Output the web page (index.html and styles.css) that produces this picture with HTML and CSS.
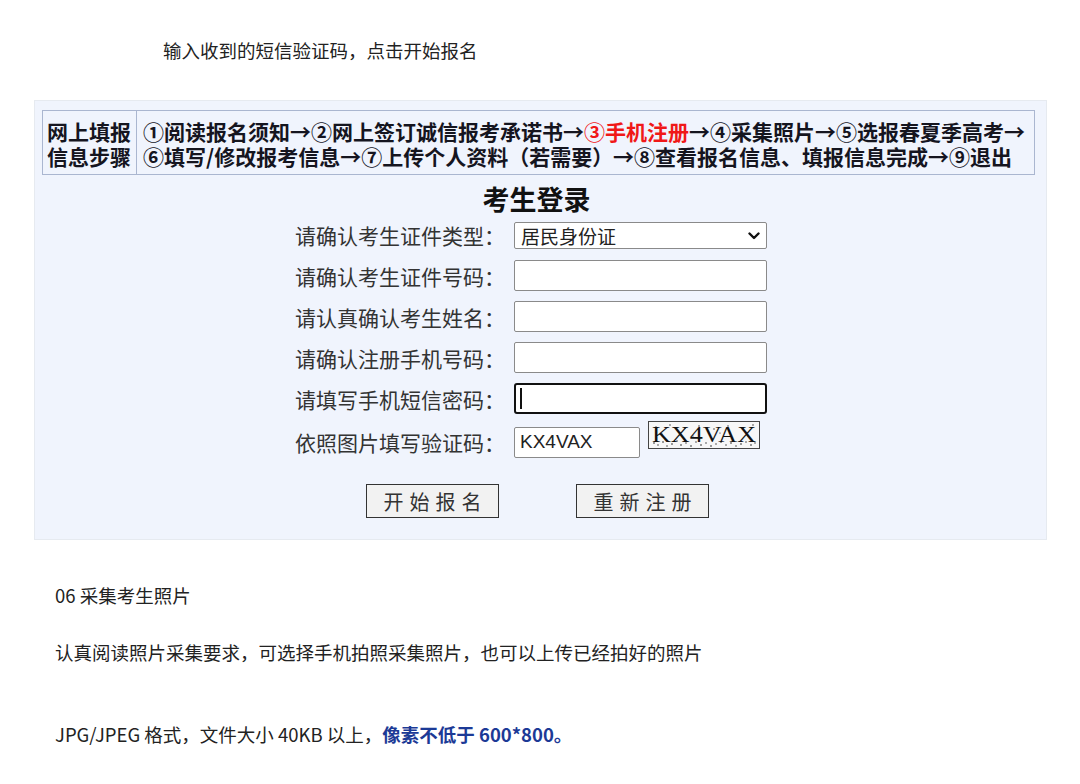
FILE: index.html
```html
<!DOCTYPE html>
<html lang="zh-CN">
<head>
<meta charset="utf-8">
<title>考生登录</title>
<link rel="stylesheet" href="styles.css">
</head>
<body>
<p class="intro">输入收到的短信验证码，点击开始报名</p>

<div class="panel">
  <table class="steps">
    <tr>
      <td class="steps-head">网上填报<br>信息步骤</td>
      <td class="steps-body">①阅读报名须知→②网上签订诚信报考承诺书→<span class="red">③手机注册</span>→④采集照片→⑤选报春夏季高考→<br>⑥填写/修改报考信息→⑦上传个人资料（若需要）→⑧查看报名信息、填报信息完成→⑨退出</td>
    </tr>
  </table>

  <h1 class="title">考生登录</h1>

  <div class="form">
    <div class="row r1">
      <label class="lbl">请确认考生证件类型：</label>
      <div class="select-wrap">
        <select class="sel"><option>居民身份证</option></select>
        <svg class="chev" width="12" height="8" viewBox="0 0 12 8"><path d="M1.5 1.5 L6 6 L10.5 1.5" fill="none" stroke="#111" stroke-width="2.4" stroke-linecap="round" stroke-linejoin="round"/></svg>
      </div>
    </div>
    <div class="row">
      <label class="lbl">请确认考生证件号码：</label>
      <input class="inp" type="text">
    </div>
    <div class="row">
      <label class="lbl">请认真确认考生姓名：</label>
      <input class="inp" type="text">
    </div>
    <div class="row">
      <label class="lbl">请确认注册手机号码：</label>
      <input class="inp" type="text">
    </div>
    <div class="row">
      <label class="lbl">请填写手机短信密码：</label>
      <div class="focus-wrap">
        <input class="inp inp-focus" type="text">
        <span class="caret"></span>
      </div>
    </div>
    <div class="row r6">
      <label class="lbl">依照图片填写验证码：</label>
      <input class="inp inp-code" type="text" value="KX4VAX">
      <svg class="captcha" width="112" height="28" viewBox="0 0 112 28">
        <rect x="0.5" y="0.5" width="111" height="27" fill="#f7f7f7" stroke="#444"/>
        <g fill="#222">
          <circle cx="6" cy="22" r="0.8"/><circle cx="10" cy="24" r="0.7"/><circle cx="15" cy="21" r="0.8"/><circle cx="19" cy="25" r="0.7"/>
          <circle cx="24" cy="23" r="0.8"/><circle cx="29" cy="20" r="0.7"/><circle cx="33" cy="24" r="0.8"/><circle cx="38" cy="22" r="0.7"/>
          <circle cx="43" cy="25" r="0.8"/><circle cx="48" cy="21" r="0.7"/><circle cx="53" cy="24" r="0.8"/><circle cx="58" cy="22" r="0.7"/>
          <circle cx="63" cy="25" r="0.8"/><circle cx="68" cy="23" r="0.7"/><circle cx="73" cy="21" r="0.8"/><circle cx="78" cy="24" r="0.7"/>
          <circle cx="83" cy="22" r="0.8"/><circle cx="88" cy="25" r="0.7"/><circle cx="93" cy="23" r="0.8"/><circle cx="98" cy="21" r="0.7"/>
          <circle cx="103" cy="24" r="0.8"/><circle cx="107" cy="22" r="0.7"/>
          <circle cx="8" cy="6" r="0.7"/><circle cx="22" cy="4" r="0.7"/><circle cx="37" cy="7" r="0.7"/><circle cx="51" cy="5" r="0.7"/>
          <circle cx="66" cy="8" r="0.7"/><circle cx="80" cy="5" r="0.7"/><circle cx="95" cy="7" r="0.7"/><circle cx="105" cy="4" r="0.7"/>
          <circle cx="14" cy="13" r="0.6"/><circle cx="45" cy="15" r="0.6"/><circle cx="72" cy="12" r="0.6"/><circle cx="100" cy="15" r="0.6"/>
        </g>
        <text x="4" y="21" textLength="104" lengthAdjust="spacingAndGlyphs" class="captcha-text">KX4VAX</text>
      </svg>
    </div>
    <div class="buttons">
      <button class="btn" type="button">开始报名</button>
      <button class="btn" type="button">重新注册</button>
    </div>
  </div>
</div>

<div class="article">
  <p class="p1">06 采集考生照片</p>
  <p class="p2">认真阅读照片采集要求，可选择手机拍照采集照片，也可以上传已经拍好的照片</p>
  <p class="p3">JPG/JPEG 格式，文件大小 40KB 以上，<strong class="blue">像素不低于 600*800。</strong></p>
</div>
</body>
</html>
```

FILE: styles.css
```css
* { box-sizing: border-box; }

body {
  margin: 0;
  background: #ffffff;
  font-family: "Noto Sans CJK SC", "Noto Sans", sans-serif;
  color: #333;
}

.intro {
  margin: 0;
  padding: 38px 0 0 163px;
  font-size: 18.5px;
  line-height: 24px;
  color: #222;
}

.panel {
  margin: 38px 0 0 34px;
  width: 1013px;
  height: 440px;
  background: #f0f4fd;
  border: 1px solid #e6eaf0;
  padding-top: 9px;
}

.steps {
  margin-left: 7px;
  width: 993px;
  border-collapse: collapse;
  border: 1px solid #aab6d0;
  font-weight: 700;
  font-size: 21px;
  line-height: 25px;
  color: #15151f;
  white-space: nowrap;
}

.steps td {
  padding: 8px 0 5px;
  vertical-align: middle;
}

.steps-head {
  width: 94px;
  padding-left: 4px !important;
  border-right: 1px solid #aab6d0;
}

.steps-body {
  padding-left: 6px !important;
}

.red { color: #f01818; }

.title {
  margin: 8px 0 0;
  text-align: center;
  font-size: 27px;
  line-height: 32px;
  font-weight: 700;
  color: #111;
  padding-right: 8px;
}

.form {
  margin-top: 0;
  padding-left: 260px;
}

.row {
  display: flex;
  align-items: center;
  height: 41px;
}

.row.r1 { height: 40px; }
.row.r6 { height: 46px; }

.lbl {
  width: 219px;
  font-size: 21px;
  color: #333;
  line-height: 26px;
}

.select-wrap {
  position: relative;
  width: 253px;
  height: 27px;
}

.sel {
  appearance: none;
  -webkit-appearance: none;
  width: 253px;
  height: 27px;
  border: 1px solid #8a8a8a;
  border-radius: 2px;
  background: #fff;
  font-family: "Noto Sans CJK SC", sans-serif;
  font-size: 19px;
  color: #222;
  padding: 0 0 0 6px;
  line-height: 25px;
}

.chev {
  position: absolute;
  right: 7px;
  top: 10px;
  pointer-events: none;
}

.inp {
  width: 253px;
  height: 31px;
  border: 1px solid #8a8a8a;
  border-radius: 2px;
  background: #fff;
  font-family: "Liberation Sans", Arial, sans-serif;
  font-size: 19px;
  color: #222;
  padding: 0 6px;
  outline: none;
}

.focus-wrap {
  position: relative;
  width: 253px;
  height: 31px;
}

.inp-focus {
  border: 2px solid #111;
  border-radius: 3px;
}

.caret {
  position: absolute;
  left: 6px;
  top: 5px;
  width: 2px;
  height: 21px;
  background: #111;
}

.inp-code {
  width: 126px;
  padding-left: 5px;
}

.captcha {
  margin-left: 8px;
  align-self: flex-start;
  margin-top: 2px;
}

.captcha-text {
  font-family: "Liberation Serif", "Times New Roman", serif;
  font-size: 24px;
  fill: #111;
}

.buttons {
  display: flex;
  gap: 77px;
  margin-top: 19px;
  padding-left: 71px;
}

.btn {
  width: 133px;
  height: 34px;
  border: 1px solid #333;
  background: #f2f2f2;
  font-family: "Noto Sans CJK SC", sans-serif;
  font-size: 20px;
  letter-spacing: 6px;
  text-indent: 6px;
  color: #333;
  padding: 0;
}

.article {
  padding-left: 55px;
  font-size: 18.5px;
  line-height: 24px;
  color: #222;
}

.article p { margin: 0; }

.p1 { padding-top: 43px; }
.p2 { padding-top: 33px; }
.p3 { padding-top: 58px; }

.blue {
  color: #1c3a96;
  font-weight: 700;
}
```
